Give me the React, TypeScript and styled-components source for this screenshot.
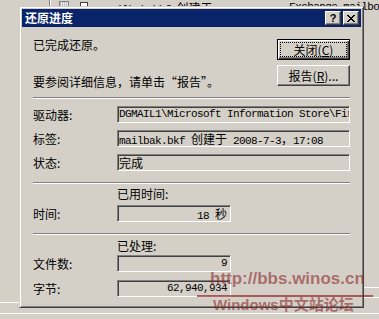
import React from "react";
import styled, { createGlobalStyle, css } from "styled-components";

const CJK = `"Noto Sans CJK SC", "Liberation Sans", sans-serif`;
const MONO = `"Liberation Mono", "Noto Sans CJK SC", monospace`;

const GlobalStyle = createGlobalStyle`
  html, body {
    margin: 0;
    padding: 0;
    background: #d4d0c8;
  }
  body {
    font-family: ${CJK};
  }
`;

const Desktop = styled.div`
  position: relative;
  width: 379px;
  height: 319px;
  overflow: hidden;
  background: #d4d0c8;
`;

/* the backup window that sits behind the dialog */
const Backdrop = styled.div`
  display: flex;
  flex-direction: column;
  height: 100%;
`;

const ListRow = styled.div`
  display: flex;
  align-items: flex-start;
  height: 13px;
  flex-shrink: 0;
  font: 11px/14px ${MONO};
  letter-spacing: -0.6px;
  color: #000;
  white-space: nowrap;
`;

const TreeEdge = styled.div`
  width: 53px;
  height: 13px;
  box-sizing: border-box;
  border-right: 1px solid #808080;
  box-shadow: 1px 0 #fff;
`;

const TapeIcon = styled.span`
  width: 11px;
  height: 10px;
  margin: 1px 0 0 9px;
  box-sizing: border-box;
  border: 1px solid #808080;
  background: repeating-linear-gradient(90deg, #c0c0c0 0 1px, #e8e8e8 1px 2px);
`;

const CheckIcon = styled.span`
  width: 8px;
  height: 8px;
  margin: 2px 0 0 11px;
  box-sizing: border-box;
  border: 1px solid #404040;
  background: #fff;
`;

const ListCell = styled.span<{ $w?: number; $gap?: number }>`
  margin-left: ${(p) => p.$gap ?? 0}px;
  width: ${(p) => (p.$w ? `${p.$w}px` : "auto")};
  overflow: hidden;
`;

const BgRule = styled.div<{ $gap: number; $from?: number; $to?: number }>`
  flex-shrink: 0;
  height: 1px;
  margin-top: ${(p) => p.$gap}px;
  margin-left: ${(p) => p.$from ?? 0}px;
  width: ${(p) => (p.$to ? `${p.$to - (p.$from ?? 0)}px` : "auto")};
  background: #fff;
`;

/* dialog */
const Window = styled.section`
  position: absolute;
  left: 19px;
  top: 6px;
  width: 345px;
  height: 302px;
  box-sizing: border-box;
  display: flex;
  flex-direction: column;
  padding: 2px;
  background: #d4d0c8;
  border: 1px solid;
  border-color: #d4d0c8 #404040 #404040 #d4d0c8;
  box-shadow: inset 1px 1px #fff, inset -1px -1px #808080;
`;

const TitleBar = styled.div`
  height: 18px;
  flex-shrink: 0;
  display: flex;
  align-items: center;
  gap: 2px;
  padding: 0 2px;
  background: #0a246a;
`;

const Caption = styled.div`
  flex: 1;
  padding-left: 1px;
  color: #fff;
  font: bold 12px/18px ${CJK};
`;

const raised = css`
  background: #d4d0c8;
  border: 1px solid;
  border-color: #fff #404040 #404040 #fff;
  box-shadow: inset -1px -1px #808080, inset 1px 1px #d4d0c8;
`;

const CaptionButton = styled.button`
  ${raised};
  width: 16px;
  height: 14px;
  box-sizing: border-box;
  padding: 0;
  display: flex;
  align-items: center;
  justify-content: center;
  color: #000;
  font: bold 11px/1 "Liberation Sans", sans-serif;
`;

const Client = styled.div`
  flex: 1;
  display: flex;
  flex-direction: column;
  padding: 12px 11px 0 11px;
`;

const TopSection = styled.div`
  display: flex;
  justify-content: space-between;
  align-items: flex-start;
`;

const Message = styled.p<{ $gap: number }>`
  margin: ${(p) => p.$gap}px 0 0;
  font: 12px/14px ${CJK};
  color: #000;
  white-space: nowrap;
`;

const ButtonStack = styled.div`
  display: flex;
  flex-direction: column;
  gap: 5px;
`;

const PushButton = styled.button<{ $isDefault?: boolean }>`
  ${raised};
  width: 73px;
  height: 21px;
  box-sizing: border-box;
  padding: 0;
  display: flex;
  color: #000;
  ${(p) =>
    p.$isDefault &&
    css`
      border: 1px solid #000;
      box-shadow: inset 1px 1px #fff, inset -1px -1px #404040,
        inset -2px -2px #808080;
    `}
`;

const FocusFrame = styled.span<{ $on?: boolean }>`
  flex: 1;
  margin: 2px;
  display: flex;
  align-items: center;
  justify-content: center;
  border: 1px dotted ${(p) => (p.$on ? "#000" : "transparent")};
  font: 12px/1 ${CJK};
  white-space: nowrap;
`;

const Key = styled.span`
  text-decoration: underline;
`;

const Rule = styled.hr<{ $gap: number }>`
  margin: ${(p) => p.$gap}px 0 0;
  height: 0;
  border: 0;
  border-top: 1px solid #808080;
  border-bottom: 1px solid #fff;
`;

const FieldGrid = styled.div<{ $top: number; $rowGap: number }>`
  margin-top: ${(p) => p.$top}px;
  display: grid;
  grid-template-columns: 84px 1fr;
  row-gap: ${(p) => p.$rowGap}px;
  align-items: center;
`;

const Label = styled.span`
  font: 12px/14px ${CJK};
  color: #000;
  white-space: nowrap;
`;

const GroupHead = styled.div<{ $top: number; $gap: number }>`
  margin: ${(p) => p.$top}px 0 ${(p) => p.$gap}px 84px;
  font: 12px/14px ${CJK};
  color: #000;
`;

const Field = styled.div<{ $w?: number; $right?: boolean }>`
  width: ${(p) => (p.$w ? `${p.$w}px` : "auto")};
  height: 17px;
  box-sizing: border-box;
  padding: ${(p) => (p.$right ? "0 3px 0 1px" : "0 1px")};
  border: 1px solid;
  border-color: #808080 #fff #fff #808080;
  box-shadow: inset 1px 1px #404040, inset -1px -1px #d4d0c8;
  overflow: hidden;
  white-space: nowrap;
  text-align: ${(p) => (p.$right ? "right" : "left")};
  color: #000;
  font: 11px/15px ${MONO};
  letter-spacing: -0.6px;
`;

const Han = styled.span`
  font: 12px/15px ${CJK};
  letter-spacing: 0;
`;

/* forum watermark stamped over the screenshot */
const Watermark = styled.div`
  position: absolute;
  left: 196px;
  top: 269px;
  width: 183px;
  display: flex;
  flex-direction: column;
  pointer-events: none;
  color: rgba(140, 40, 40, 0.6);
  font-family: "Liberation Sans", "Noto Sans CJK SC", sans-serif;
  font-weight: bold;
  white-space: nowrap;
`;

const WmUrl = styled.div`
  padding-left: 14px;
  font-size: 17px;
  line-height: 20px;
`;

const WmBar = styled.div`
  margin: 6px 0 0 1px;
  width: 176px;
  height: 2px;
  background: rgba(150, 40, 40, 0.7);
`;

const WmName = styled.div`
  padding-left: 17px;
  font-size: 15px;
  line-height: 16px;
`;

const CloseGlyph = () => (
  <svg width="8" height="7" viewBox="0 0 8 7" shapeRendering="crispEdges">
    <path
      fill="#000"
      d="M0 0h2v1H0zM6 0h2v1H6zM1 1h2v1H1zM5 1h2v1H5zM2 2h4v1H2zM3 3h2v1H3zM2 4h4v1H2zM1 5h2v1H1zM5 5h2v1H5zM0 6h2v1H0zM6 6h2v1H6z"
    />
  </svg>
);

const App = () => {
  return (
    <>
      <GlobalStyle />
      <Desktop>
        <Backdrop>
          <ListRow>
            <TreeEdge />
            <TapeIcon />
            <CheckIcon />
            <ListCell $gap={17} $w={198}>
              mailbak.bkf <Han>创建于</Han> 2008-7-3，17:08
            </ListCell>
            <ListCell>Exchange  mailbox</ListCell>
          </ListRow>
          <BgRule $gap={274} $from={364} $to={379} />
          <BgRule $gap={9} $from={364} $to={379} />
          <BgRule $gap={4} $from={0} $to={19} />
          <BgRule $gap={10} />
        </Backdrop>

        <Window>
          <TitleBar>
            <Caption>还原进度</Caption>
            <CaptionButton>?</CaptionButton>
            <CaptionButton>
              <CloseGlyph />
            </CaptionButton>
          </TitleBar>

          <Client>
            <TopSection>
              <div>
                <Message $gap={-1}>已完成还原。</Message>
                <Message $gap={23}>要参阅详细信息，请单击“报告”。</Message>
              </div>
              <ButtonStack>
                <PushButton $isDefault>
                  <FocusFrame $on>
                    关闭(<Key>C</Key>)
                  </FocusFrame>
                </PushButton>
                <PushButton>
                  <FocusFrame>
                    报告(<Key>R</Key>)...
                  </FocusFrame>
                </PushButton>
              </ButtonStack>
            </TopSection>

            <Rule $gap={8} />

            <FieldGrid $top={7} $rowGap={7}>
              <Label>驱动器:</Label>
              <Field>DGMAIL1\Microsoft Information Store\First Storage Group</Field>
              <Label>标签:</Label>
              <Field>
                mailbak.bkf <Han>创建于</Han> 2008-7-3<Han>，</Han>17:08
              </Field>
              <Label>状态:</Label>
              <Field>
                <Han>完成</Han>
              </Field>
            </FieldGrid>

            <Rule $gap={11} />

            <GroupHead $top={3} $gap={4}>
              已用时间:
            </GroupHead>
            <FieldGrid $top={0} $rowGap={0}>
              <Label>时间:</Label>
              <Field $w={114} $right>
                18 <Han>秒</Han>
              </Field>
            </FieldGrid>

            <Rule $gap={11} />

            <GroupHead $top={4} $gap={2}>
              已处理:
            </GroupHead>
            <FieldGrid $top={0} $rowGap={8}>
              <Label>文件数:</Label>
              <Field $w={114} $right>
                9
              </Field>
              <Label>字节:</Label>
              <Field $w={114} $right>
                62,940,934
              </Field>
            </FieldGrid>
          </Client>
        </Window>

        <Watermark>
          <WmUrl>http://bbs.winos.cn</WmUrl>
          <WmBar />
          <WmName>Windows中文站论坛</WmName>
        </Watermark>
      </Desktop>
    </>
  );
};

export default App;
